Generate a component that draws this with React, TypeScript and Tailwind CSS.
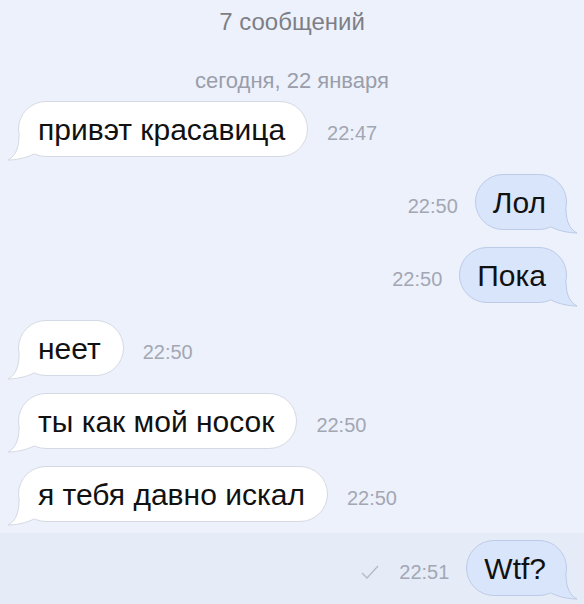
import React from "react";

type Msg = { text: string; time: string; out?: boolean; read?: boolean };

const font = { fontFamily: '"Liberation Sans", Arial, sans-serif' };

function Tail({ out }: { out?: boolean }) {
  const fill = out ? "#d9e5fb" : "#ffffff";
  const stroke = out ? "#bccbe6" : "#d5d9e3";
  return (
    <svg
      width="34"
      height="32"
      viewBox="0 0 34 32"
      className={
        out
          ? "absolute -right-[13px] top-[28px] -scale-x-100"
          : "absolute -left-[13px] top-[28px]"
      }
    >
      <path
        d="M13,6 C13,20 8,27 2,30 C10,30 20,28 28,24 L34,10 Z"
        fill={fill}
      />
      <path
        d="M13,6 C13,20 8,27 2,30 C10,30 20,28 28,24"
        fill="none"
        stroke={stroke}
        strokeWidth="1"
      />
    </svg>
  );
}

function Bubble({ m }: { m: Msg }) {
  return (
    <div
      className={
        m.out
          ? "relative h-[56px] flex items-center rounded-full border border-[#bccbe6] bg-[#d9e5fb] pl-[17px] pr-[20px] text-[30px] text-[#111]"
          : "relative h-[56px] flex items-center rounded-full border border-[#d5d9e3] bg-white pl-[19px] pr-[22px] text-[30px] text-[#111]"
      }
    >
      <span className="relative z-10">{m.text}</span>
      <Tail out={m.out} />
    </div>
  );
}

function Time({ m }: { m: Msg }) {
  return (
    <div className="flex items-center gap-[20px] pt-[8px] text-[20px] text-[#a3a7b3]">
      {m.read && (
        <svg width="18" height="14" viewBox="0 0 18 14">
          <path d="M1,8 L6,13 L17,1" fill="none" stroke="#b5b9c4" strokeWidth="1.3" />
        </svg>
      )}
      <span>{m.time}</span>
    </div>
  );
}

function Row({ m }: { m: Msg }) {
  if (m.out) {
    return (
      <div className="flex justify-end items-center gap-[17px] pr-[17px]">
        <Time m={m} />
        <Bubble m={m} />
      </div>
    );
  }
  return (
    <div className="flex items-center gap-[19px] pl-[18px]">
      <Bubble m={m} />
      <Time m={m} />
    </div>
  );
}

const msgs: Msg[] = [
  { text: "привэт красавица", time: "22:47" },
  { text: "Лол", time: "22:50", out: true },
  { text: "Пока", time: "22:50", out: true },
  { text: "неет", time: "22:50" },
  { text: "ты как мой носок", time: "22:50" },
  { text: "я тебя давно искал", time: "22:50" },
];

export default function App() {
  return (
    <div className="w-[584px] h-[604px] overflow-hidden bg-[#edf1fc] flex flex-col" style={font}>
      <div className="h-[44px] flex items-center justify-center text-[24px] text-[#7d7f86]">
        7 сообщений
      </div>
      <div className="h-[30px] mt-[21px] flex items-center justify-center text-[22px] text-[#9a9eaa]">
        сегодня, 22 января
      </div>
      <div className="flex flex-col gap-[17px] mt-[6px]">
        {msgs.map((m, i) => (
          <Row key={i} m={m} />
        ))}
      </div>
      <div className="mt-[11px] flex-1 bg-[#e6ebf8] pt-[7px]">
        <Row m={{ text: "Wtf?", time: "22:51", out: true, read: true }} />
      </div>
    </div>
  );
}
